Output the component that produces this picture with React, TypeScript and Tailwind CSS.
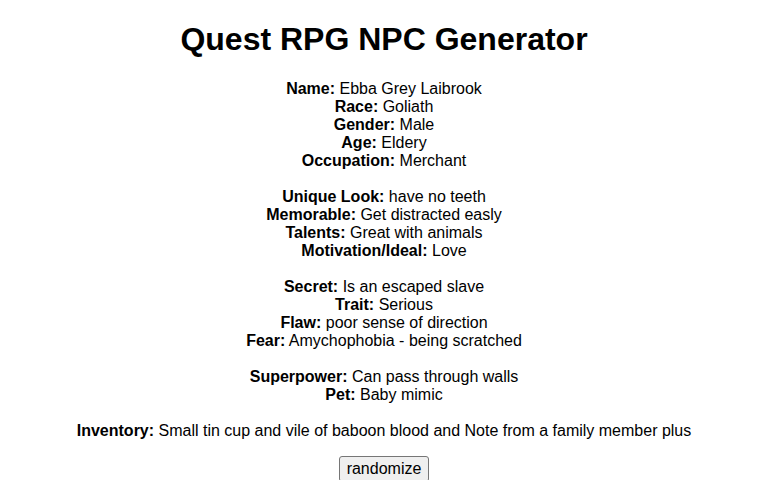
import React from "react";

const groups: [string, string][][] = [
  [
    ["Name:", "Ebba Grey Laibrook"],
    ["Race:", "Goliath"],
    ["Gender:", "Male"],
    ["Age:", "Eldery"],
    ["Occupation:", "Merchant"],
  ],
  [
    ["Unique Look:", "have no teeth"],
    ["Memorable:", "Get distracted easly"],
    ["Talents:", "Great with animals"],
    ["Motivation/Ideal:", "Love"],
  ],
  [
    ["Secret:", "Is an escaped slave"],
    ["Trait:", "Serious"],
    ["Flaw:", "poor sense of direction"],
    ["Fear:", "Amychophobia - being scratched"],
  ],
  [
    ["Superpower:", "Can pass through walls"],
    ["Pet:", "Baby mimic"],
  ],
  [["Inventory:", "Small tin cup and vile of baboon blood and Note from a family member plus"]],
];

export default function App() {
  return (
    <div className="min-h-[480px] bg-white text-black text-center font-['Liberation_Sans',Arial,sans-serif] text-[16px] leading-[18px]">
      <div className="pt-[21.44px]">
        <h1 className="text-[32px] font-bold leading-[37px] mb-[21.44px]">Quest RPG NPC Generator</h1>
        <div className="flex flex-col gap-[18px]">
          {groups.map((g, i) => (
            <div key={i} className="flex flex-col">
              {g.map(([k, v]) => (
                <div key={k} className="h-[18px] whitespace-nowrap">
                  <b>{k}</b> {v}
                </div>
              ))}
            </div>
          ))}
          <div className="flex justify-center -mt-[2px]">
            <button className="px-[7px] py-[3px] border border-[#767676] rounded-[3px] bg-[#efefef] text-[16px] leading-[18px] text-black font-['Liberation_Sans',Arial,sans-serif]">
              randomize
            </button>
          </div>
        </div>
      </div>
    </div>
  );
}
